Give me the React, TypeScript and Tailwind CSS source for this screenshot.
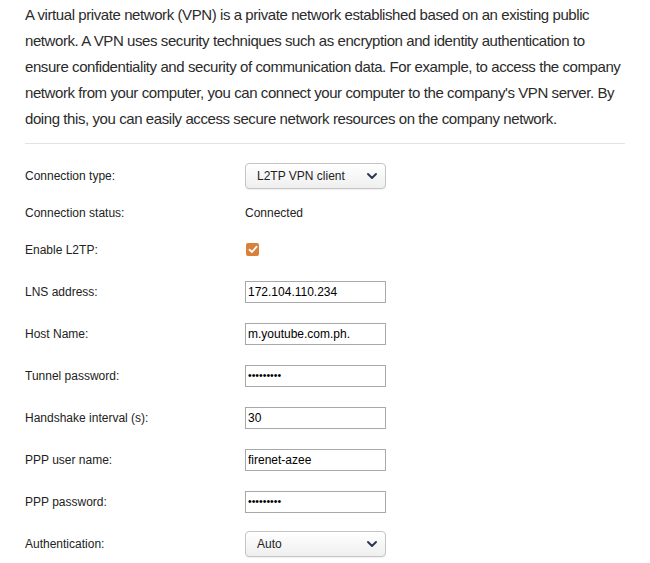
const intro =
  "A virtual private network (VPN) is a private network established based on an existing public network. A VPN uses security techniques such as encryption and identity authentication to ensure confidentiality and security of communication data. For example, to access the company network from your computer, you can connect your computer to the company's VPN server. By doing this, you can easily access secure network resources on the company network.";

function Chevron() {
  return (
    <svg width="12" height="8" viewBox="0 0 12 8" className="shrink-0">
      <path d="M2 2 L6 6 L10 2" fill="none" stroke="#2c3a55" strokeWidth="2" strokeLinecap="round" strokeLinejoin="round" />
    </svg>
  );
}

function SelectBox({ value }: { value: string }) {
  return (
    <div className="flex h-[26px] w-[141px] items-center justify-between rounded-[4px] border border-[#c4c4c4] bg-gradient-to-b from-white to-[#efefef] pl-[11px] pr-[7px] shadow-[0_1px_1px_rgba(0,0,0,0.06)]">
      <span>{value}</span>
      <Chevron />
    </div>
  );
}

function TextBox({ value, secret }: { value: string; secret?: boolean }) {
  return (
    <div className="flex h-[22px] w-[141px] items-center border border-[#a8a8a8] bg-white pl-[2px]">
      {secret ? (
        <span className="text-[10.5px] text-black">•••••••••</span>
      ) : (
        <span className="text-black">{value}</span>
      )}
    </div>
  );
}

function Row({ label, children, tall }: { label: string; children: React.ReactNode; tall?: boolean }) {
  return (
    <div className={`flex items-center ${tall ? "h-[42px]" : "h-[37px]"}`}>
      <div className="w-[220px] shrink-0">{label}</div>
      {children}
    </div>
  );
}

export default function App() {
  return (
    <div className="min-h-[563px] w-[650px] bg-white px-[25px] pt-[2px] font-['Liberation_Sans',Arial,sans-serif] text-[#2b2b2b]">
      <p className="text-[15px] leading-[26px] tracking-[-0.42px]">{intro}</p>

      <div className="mt-[11px] border-t border-[#e3e3e3]" />

      <div className="mt-[13px] text-[12px] text-[#222]">
        <Row label="Connection type:">
          <SelectBox value="L2TP VPN client" />
        </Row>
        <Row label="Connection status:">
          <span>Connected</span>
        </Row>
        <Row label="Enable L2TP:">
          <div className="ml-[1px] flex h-[13px] w-[13px] items-center justify-center rounded-[2px] bg-[#d9803a]">
            <svg width="10" height="9" viewBox="0 0 10 9">
              <path d="M1.5 4.8 L4 7 L8.5 1.8" fill="none" stroke="white" strokeWidth="1.8" strokeLinecap="round" strokeLinejoin="round" />
            </svg>
          </div>
        </Row>
        <div className="mt-[3px]">
          <Row label="LNS address:" tall>
            <TextBox value="172.104.110.234" />
          </Row>
          <Row label="Host Name:" tall>
            <TextBox value="m.youtube.com.ph." />
          </Row>
          <Row label="Tunnel password:" tall>
            <TextBox value="" secret />
          </Row>
          <Row label="Handshake interval (s):" tall>
            <TextBox value="30" />
          </Row>
          <Row label="PPP user name:" tall>
            <TextBox value="firenet-azee" />
          </Row>
          <Row label="PPP password:" tall>
            <TextBox value="" secret />
          </Row>
          <Row label="Authentication:" tall>
            <SelectBox value="Auto" />
          </Row>
        </div>
      </div>
    </div>
  );
}
